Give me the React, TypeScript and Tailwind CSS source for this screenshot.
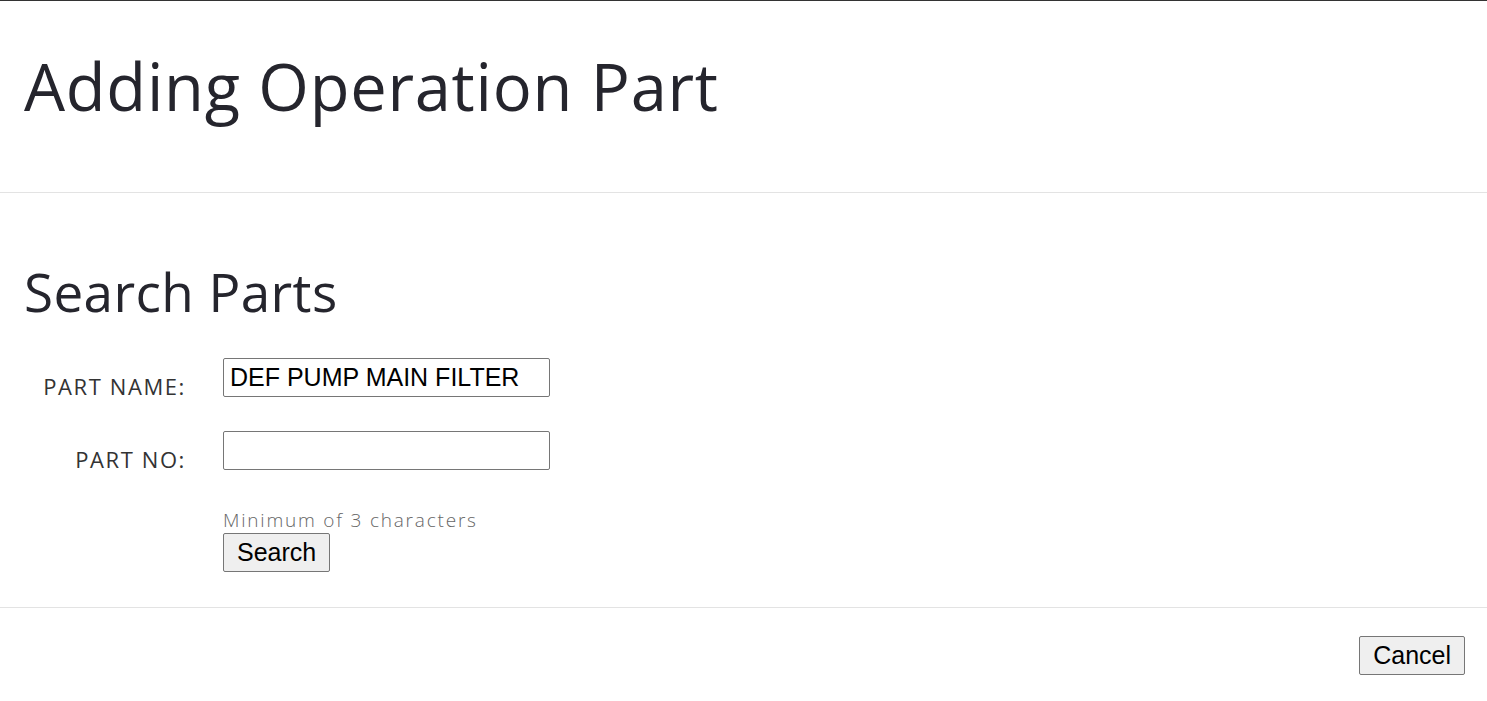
export default function App() {
  return (
    <div className="min-h-[701px] w-full bg-white border-t border-[#333] font-['Open_Sans',sans-serif] text-[#25252d]">
      <header className="h-[192px] border-b border-[#e3e3e3] px-6 pt-[53px]">
        <h1 className="text-[65px] leading-none tracking-[0.75px]">Adding Operation Part</h1>
      </header>

      <section className="h-[415px] border-b border-[#e3e3e3] px-6 pt-[72px]">
        <h2 className="text-[53px] leading-none tracking-[0.4px]">Search Parts</h2>

        <div className="mt-[40px] grid grid-cols-[199px_327px] gap-y-[34px] items-end">
          <label className="text-right pr-[37px] text-[22px] leading-none text-[#333] tracking-[1.6px]">PART NAME:</label>
          <input
            defaultValue="DEF PUMP MAIN FILTER"
            className="h-[39px] w-[327px] border border-[#767676] rounded-[2px] px-[6px] text-[25px] text-black font-['Liberation_Sans',Arial,sans-serif]"
          />
          <label className="text-right pr-[37px] text-[22px] leading-none text-[#333] tracking-[1.6px]">PART NO:</label>
          <input className="h-[39px] w-[327px] border border-[#767676] rounded-[2px] px-[6px] text-[25px] text-black font-['Liberation_Sans',Arial,sans-serif]" />
        </div>

        <div className="ml-[199px] mt-[38px] flex flex-col items-start">
          <p className="text-[19px] leading-[25px] font-light text-[#666] tracking-[1.8px]">Minimum of 3 characters</p>
          <button className="h-[39px] px-[13px] bg-[#efefef] border border-[#767676] rounded-[2px] text-[25px] text-black font-['Liberation_Sans',Arial,sans-serif]">
            Search
          </button>
        </div>
      </section>

      <footer className="flex justify-end px-[22px] pt-[28px]">
        <button className="h-[39px] px-[13px] bg-[#efefef] border border-[#767676] rounded-[2px] text-[25px] text-black font-['Liberation_Sans',Arial,sans-serif]">
          Cancel
        </button>
      </footer>
    </div>
  );
}
